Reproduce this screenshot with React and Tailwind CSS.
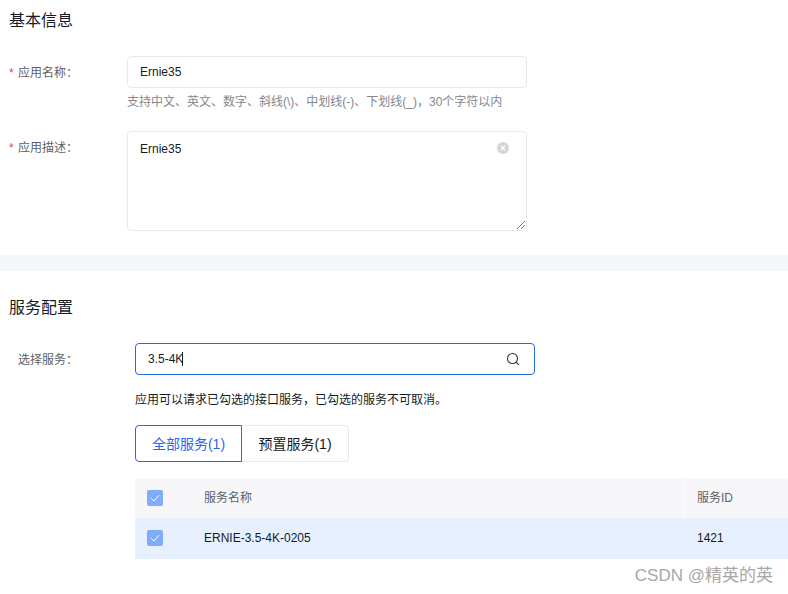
import React from "react";

const font = { fontFamily: '"Liberation Sans", Arial, "Noto Sans CJK SC", sans-serif' };

function Check() {
  return (
    <span className="flex h-4 w-[16px] items-center justify-center rounded-[2px] bg-[#7fadfb]">
      <svg width="12" height="12" viewBox="0 0 12 12" fill="none">
        <path d="M2.2 6.2 L5 9 L10 3.2" stroke="#ffffff" strokeWidth="1" />
      </svg>
    </span>
  );
}

function Label({ required, children }) {
  return (
    <div className="flex h-[32px] w-[118px] shrink-0 items-center pt-[2px] text-xs text-[#5c5f66]">
      <span className="w-[9px] text-[#f33e3e]">{required ? "*" : ""}</span>
      <span>{children}：</span>
    </div>
  );
}

export default function App() {
  return (
    <div style={font} className="relative h-[594px] w-[788px] overflow-hidden bg-white text-xs text-[#151b26]">
      <section className="h-[255px] pl-[9px] pt-[12px]">
        <h2 className="text-base leading-[18px] text-[#151b26]">基本信息</h2>
        <div className="mt-[26px] flex">
          <Label required>应用名称</Label>
          <div>
            <div className="flex h-[32px] w-[400px] items-center rounded-[4px] border border-[#e8e9eb] px-[12px]">Ernie35</div>
            <p className="mt-[7px] leading-[14px] text-[#84868c]">支持中文、英文、数字、斜线(\)、中划线(-)、下划线(_)，30个字符以内</p>
          </div>
        </div>
        <div className="mt-[22px] flex">
          <Label required>应用描述</Label>
          <div className="relative h-[100px] w-[400px] rounded-[4px] border border-[#e8e9eb] px-[12px] pt-[10px] leading-[14px]">
            Ernie35
            <svg className="absolute right-[17px] top-[10px]" width="12" height="12" viewBox="0 0 12 12">
              <circle cx="6" cy="6" r="6" fill="#d4d6d9" />
              <path d="M4 4 L8 8 M8 4 L4 8" stroke="#ffffff" strokeWidth="1.2" />
            </svg>
            <svg className="absolute bottom-[0px] right-[0px]" width="10" height="10" viewBox="0 0 10 10">
              <path d="M1 9 L9 1 M5 9 L9 5" stroke="#555a60" strokeWidth="0.8" />
            </svg>
          </div>
        </div>
      </section>

      <div className="h-[16px] bg-[#f5f6f9]" />

      <section className="pt-[28px]">
        <h2 className="pl-[9px] text-base leading-[18px]">服务配置</h2>
        <div className="mt-[26px] flex">
          <div className="flex h-[32px] w-[135px] shrink-0 items-center pl-[18px] pt-[2px] text-[#5c5f66]">选择服务：</div>
          <div className="min-w-0 flex-1">
            <div className="flex h-[32px] w-[400px] items-center justify-between rounded-[4px] border border-[#2468f2] pl-[12px] pr-[14px]">
              <span className="flex items-center">
                3.5-4K
                <span className="ml-[-1px] h-[14px] w-px bg-[#151b26]" />
              </span>
              <svg width="14" height="14" viewBox="0 0 14 14" fill="none" stroke="#303540" strokeWidth="1.1">
                <circle cx="6.5" cy="6.5" r="5" />
                <path d="M10 10 L12.8 12.8" />
              </svg>
            </div>
            <p className="mt-[18px] leading-[14px]">应用可以请求已勾选的接口服务，已勾选的服务不可取消。</p>
            <div className="mt-[18px] flex h-[37px] text-sm">
              <div className="flex w-[107px] items-center justify-center rounded-l-[4px] border border-[#2468f2] text-[#2468f2]">全部服务(1)</div>
              <div className="flex w-[107px] items-center justify-center rounded-r-[4px] border border-l-0 border-[#e8e9eb]">预置服务(1)</div>
            </div>
            <div className="mt-[16px]">
              <div className="flex h-[40px] items-center rounded-t-[2px] bg-[#f7f7f9] text-[#5c5f66]">
                <div className="w-[69px] shrink-0 pl-[12px]"><Check /></div>
                <div className="flex-1">服务名称</div>
                <div className="flex h-full w-[105px] shrink-0 items-center border-l border-[#ffffff] pl-[13px]">服务ID</div>
              </div>
              <div className="flex h-[41px] items-center bg-[#e6f0ff] pb-[1px]">
                <div className="w-[69px] shrink-0 pl-[12px]"><Check /></div>
                <div className="flex-1">ERNIE-3.5-4K-0205</div>
                <div className="w-[105px] shrink-0 pl-[14px]">1421</div>
              </div>
            </div>
          </div>
        </div>
      </section>

      <div className="absolute right-[15px] top-[565px] text-[17px] leading-[22px] text-[#a8a8a8]">CSDN @精英的英</div>
    </div>
  );
}
